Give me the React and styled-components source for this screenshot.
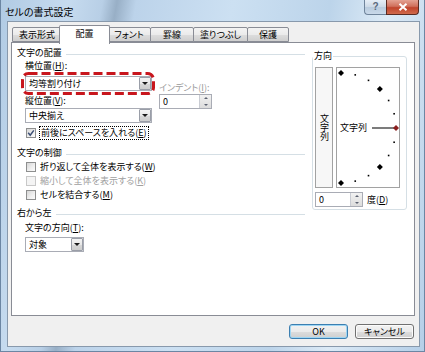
import styled, { createGlobalStyle } from "styled-components";

const GlobalStyle = createGlobalStyle`
  html, body {
    margin: 0;
    padding: 0;
    background: #ffffff;
  }
  body {
    font-family: "Noto Sans CJK JP", "Noto Sans", sans-serif;
    font-size: 9px;
    font-feature-settings: "palt";
    color: #000;
  }
`;

const tabs = [
  { label: "表示形式", width: 50 },
  { label: "配置", width: 47, active: true },
  { label: "フォント", width: 44 },
  { label: "罫線", width: 44 },
  { label: "塗りつぶし", width: 55 },
  { label: "保護", width: 42 },
];

// points of the orientation dial, every 15 degrees
const dialPoints = Array.from({ length: 13 }, (_, i) => {
  const deg = -90 + i * 15;
  const rad = (deg * Math.PI) / 180;
  return {
    x: 4 + 55 * Math.cos(rad),
    y: 60 + 55 * Math.sin(rad),
    big: deg % 45 === 0,
    red: deg === 0,
  };
});

const Arrow = ({ up }) => <ArrowShape $up={up} />;

const Combo = ({ value, width }) => (
  <ComboBox $w={width}>
    <ComboValue>{value}</ComboValue>
    <DropButton>
      <Arrow />
    </DropButton>
  </ComboBox>
);

const Spin = ({ value, width }) => (
  <SpinBox $w={width}>
    <SpinValue>{value}</SpinValue>
    <SpinButtons>
      <SpinHalf>
        <Arrow up />
      </SpinHalf>
      <SpinHalf>
        <Arrow />
      </SpinHalf>
    </SpinButtons>
  </SpinBox>
);

const CheckBox = ({ checked, disabled }) => (
  <Box $disabled={disabled}>
    {checked && (
      <svg width="8" height="8" viewBox="0 0 8 8">
        <polyline
          points="1.2,3.8 3.2,6.2 6.8,1.4"
          fill="none"
          stroke="#3b4e74"
          strokeWidth="1.5"
        />
      </svg>
    )}
  </Box>
);

const FormatCellsDialog = () => {
  return (
    <Window>
      <TitleBar>
        <TitleText>セルの書式設定</TitleText>
        <Captions>
          <HelpButton>?</HelpButton>
          <CloseButton>
            <svg width="10" height="8" viewBox="0 0 10 8">
              <path
                d="M1.5 0.8 L8.5 7.2 M8.5 0.8 L1.5 7.2"
                stroke="#fff"
                strokeWidth="2"
              />
            </svg>
          </CloseButton>
        </Captions>
      </TitleBar>

      <Body>
        <TabRow>
          {tabs.map((t) => (
            <Tab key={t.label} $w={t.width} $active={t.active}>
              {t.label}
            </Tab>
          ))}
        </TabRow>

        <Panel>
          <LeftColumn>
            <Heading>文字の配置</Heading>
            <Indent>
              <Label>
                横位置(<u>H</u>):
              </Label>
              <AlignRow>
                <AlignStack>
                  <Marked>
                    <Combo value="均等割り付け" width={127} />
                    <MarkSvg width="134" height="23" viewBox="0 0 134 23">
                      <rect
                        x="1.5"
                        y="1.5"
                        width="131"
                        height="20"
                        rx="6"
                        fill="none"
                        stroke="#c8161d"
                        strokeWidth="3"
                        strokeDasharray="9 4"
                      />
                    </MarkSvg>
                  </Marked>
                  <Label $top={4}>
                    縦位置(<u>V</u>):
                  </Label>
                  <Combo value="中央揃え" width={127} />
                </AlignStack>
                <IndentStack>
                  <Label $disabled>
                    インデント(<u>I</u>):
                  </Label>
                  <Spin value="0" width={53} />
                </IndentStack>
              </AlignRow>
              <CheckRow $top={3}>
                <CheckBox checked />
                <FocusText>
                  前後にスペースを入れる(<u>E</u>)
                </FocusText>
              </CheckRow>
            </Indent>

            <Heading $top={7}>文字の制御</Heading>
            <Indent>
              <CheckRow $top={1}>
                <CheckBox />
                <CheckText>
                  折り返して全体を表示する(<u>W</u>)
                </CheckText>
              </CheckRow>
              <CheckRow>
                <CheckBox disabled />
                <CheckText $disabled>
                  縮小して全体を表示する(<u>K</u>)
                </CheckText>
              </CheckRow>
              <CheckRow>
                <CheckBox />
                <CheckText>
                  セルを結合する(<u>M</u>)
                </CheckText>
              </CheckRow>
            </Indent>

            <Heading $top={5}>右から左</Heading>
            <Indent>
              <Label $top={3}>
                文字の方向(<u>T</u>):
              </Label>
              <ComboGap>
                <Combo value="対象" width={59} />
              </ComboGap>
            </Indent>
          </LeftColumn>

          <Group>
            <Legend>方向</Legend>
            <OrientRow>
              <VerticalText>文字列</VerticalText>
              <Dial>
                <DialDots width="62" height="119" viewBox="0 0 62 119">
                  {dialPoints.map((p, i) =>
                    p.big ? (
                      <polygon
                        key={i}
                        points={`${p.x},${p.y - 3} ${p.x + 3},${p.y} ${p.x},${p.y + 3} ${p.x - 3},${p.y}`}
                        fill={p.red ? "#8a1f1f" : "#000"}
                      />
                    ) : (
                      <rect
                        key={i}
                        x={p.x - 0.8}
                        y={p.y - 0.8}
                        width="1.6"
                        height="1.6"
                        fill="#000"
                      />
                    )
                  )}
                </DialDots>
                <DialCaption>文字列</DialCaption>
                <Needle />
              </Dial>
            </OrientRow>
            <DegreeRow>
              <Spin value="0" width={48} />
              <span>
                度(<u>D</u>)
              </span>
            </DegreeRow>
          </Group>
        </Panel>

        <ButtonRow>
          <PushButton $default>OK</PushButton>
          <PushButton>キャンセル</PushButton>
        </ButtonRow>
      </Body>
    </Window>
  );
};

const App = () => (
  <>
    <GlobalStyle />
    <FormatCellsDialog />
  </>
);

export default App;

// styled components

const Window = styled.div`
  box-sizing: border-box;
  width: 425px;
  height: 352px;
  display: flex;
  flex-direction: column;
  padding: 0 4px 4px 6px;
  border: 1px solid #6c86a3;
  border-top: none;
  background: linear-gradient(
    100deg,
    #b1cbe4 0%,
    #c6dbef 14%,
    #b8cfe6 21%,
    #98afc6 24%,
    #bcd3ea 28%,
    #cce0f2 48%,
    #bcd4ea 68%,
    #dceaf6 80%,
    #b5cfe8 100%
  );
`;

const TitleBar = styled.div`
  height: 21px;
  display: flex;
  justify-content: space-between;
  align-items: flex-start;
  flex-shrink: 0;
`;

const TitleText = styled.span`
  margin: 5px 0 0 -2px;
  font-size: 10px;
  line-height: 13px;
  color: #000;
`;

const Captions = styled.div`
  display: flex;
  margin-right: 1px;
`;

const HelpButton = styled.div`
  box-sizing: border-box;
  width: 22px;
  height: 15px;
  border: 1px solid #6f849b;
  border-top: none;
  border-right: none;
  border-radius: 0 0 0 4px;
  background: linear-gradient(#e6eef6, #cdd9e6 50%, #b9cbdd 51%, #c9d9ea);
  color: #5a6a7c;
  font-family: "Liberation Sans", Arial, sans-serif;
  font-size: 10px;
  font-weight: bold;
  line-height: 14px;
  text-align: center;
`;

const CloseButton = styled.div`
  box-sizing: border-box;
  width: 33px;
  height: 15px;
  border: 1px solid #5b2b22;
  border-top: none;
  border-radius: 0 0 4px 0;
  background: linear-gradient(#e4a293, #d0705c 45%, #c0442c 55%, #d06a4c);
  display: flex;
  align-items: center;
  justify-content: center;
`;

const Body = styled.div`
  flex: 1;
  box-sizing: border-box;
  background: #f0f0f0;
  border: 1px solid #8899ac;
  padding: 3px 4px 0 3px;
  display: flex;
  flex-direction: column;
`;

const TabRow = styled.div`
  height: 17px;
  display: flex;
  align-items: flex-end;
  padding-left: 1px;
  position: relative;
  z-index: 1;
`;

const Tab = styled.div`
  box-sizing: border-box;
  width: ${(p) => (p.$active ? p.$w + 4 : p.$w)}px;
  height: ${(p) => (p.$active ? 19 : 15)}px;
  margin: 0 ${(p) => (p.$active ? -2 : 0)}px
    ${(p) => (p.$active ? -2 : 0)}px ${(p) => (p.$active ? -3 : -1)}px;
  &:first-child {
    margin-left: 0;
  }
  border: 1px solid #898c95;
  border-bottom: ${(p) => (p.$active ? "none" : "1px solid #898c95")};
  border-radius: 2px 2px 0 0;
  background: ${(p) =>
    p.$active
      ? "#ffffff"
      : "linear-gradient(#f3f3f3, #ebebeb 50%, #dddddd 51%, #cfcfcf)"};
  position: relative;
  z-index: ${(p) => (p.$active ? 2 : 1)};
  display: flex;
  justify-content: center;
  align-items: ${(p) => (p.$active ? "flex-start" : "center")};
  padding-top: ${(p) => (p.$active ? 2 : 0)}px;
  line-height: 12px;
  font-size: 9px;
  white-space: nowrap;
`;

const Panel = styled.div`
  box-sizing: border-box;
  height: 274px;
  background: #ffffff;
  border: 1px solid #898c95;
  padding: 4px 7px 0 5px;
  display: flex;
  gap: 7px;
  align-items: flex-start;
`;

const LeftColumn = styled.div`
  width: 288px;
  display: flex;
  flex-direction: column;
`;

const Heading = styled.div`
  display: flex;
  align-items: center;
  gap: 4px;
  height: 12px;
  line-height: 12px;
  margin-top: ${(p) => p.$top || 0}px;
  white-space: nowrap;
  &::after {
    content: "";
    flex: 1;
    border-top: 1px solid #d5dfe5;
    margin-top: 3px;
  }
`;

const Indent = styled.div`
  display: flex;
  flex-direction: column;
  padding-left: 8px;
`;

const Label = styled.div`
  height: 12px;
  line-height: 12px;
  margin-top: ${(p) => p.$top ?? 1}px;
  color: ${(p) => (p.$disabled ? "#9a9a9a" : "#000")};
  white-space: nowrap;
`;

const AlignRow = styled.div`
  display: flex;
  margin-top: 4px;
`;

const AlignStack = styled.div`
  display: flex;
  flex-direction: column;
  & > div:last-child {
    margin-top: 1px;
  }
`;

const IndentStack = styled.div`
  display: flex;
  flex-direction: column;
  margin-left: 7px;
  padding-top: 6px;
  & > div:first-child {
    margin-top: 0;
  }
`;

const Marked = styled.div`
  position: relative;
`;

const MarkSvg = styled.svg`
  position: absolute;
  left: -4px;
  top: -4px;
  pointer-events: none;
`;

const ComboGap = styled.div`
  margin-top: 3px;
`;

const ComboBox = styled.div`
  box-sizing: border-box;
  width: ${(p) => p.$w}px;
  height: 15px;
  border: 1px solid #a9acb5;
  background: #ffffff;
  display: flex;
  align-items: stretch;
`;

const ComboValue = styled.span`
  flex: 1;
  padding-left: 3px;
  line-height: 13px;
  white-space: nowrap;
`;

const DropButton = styled.div`
  box-sizing: border-box;
  width: 12px;
  border: 1px solid #9a9ea8;
  border-radius: 1px;
  background: linear-gradient(#f4f4f4, #e8e8e8 50%, #d8d8d8 51%, #cdcdcd);
  display: flex;
  align-items: center;
  justify-content: center;
`;

const ArrowShape = styled.span`
  width: 0;
  height: 0;
  border-left: ${(p) => (p.$up ? 2 : 3)}px solid transparent;
  border-right: ${(p) => (p.$up ? 2 : 3)}px solid transparent;
  ${(p) =>
    p.$up
      ? "border-bottom: 2px solid #5b6170;"
      : "border-top: 3px solid #1a1a1a;"}
`;

const SpinBox = styled.div`
  box-sizing: border-box;
  width: ${(p) => p.$w}px;
  height: 15px;
  border: 1px solid #a9acb5;
  background: #ffffff;
  display: flex;
`;

const SpinValue = styled.span`
  flex: 1;
  padding-left: 3px;
  line-height: 13px;
`;

const SpinButtons = styled.div`
  width: 11px;
  display: flex;
  flex-direction: column;
  border-left: 1px solid #c9ccd3;
  background: linear-gradient(#f2f2f2, #dcdcdc);
`;

const SpinHalf = styled.div`
  flex: 1;
  display: flex;
  align-items: center;
  justify-content: center;
  & > span {
    border-top-color: #5b6170;
    border-top-width: 2px;
    border-left-width: 2px;
    border-right-width: 2px;
  }
`;

const CheckRow = styled.div`
  display: flex;
  align-items: center;
  gap: 4px;
  height: 14px;
  padding-left: 1px;
  margin-top: ${(p) => p.$top || 0}px;
`;

const Box = styled.span`
  box-sizing: border-box;
  width: 10px;
  height: 10px;
  border: 1px solid ${(p) => (p.$disabled ? "#c8c8c8" : "#8e8f8f")};
  background: ${(p) =>
    p.$disabled
      ? "#f4f4f4"
      : "linear-gradient(135deg, #d6d6d6, #f0f0f0 60%, #fbfbfb)"};
  display: flex;
  align-items: center;
  justify-content: center;
`;

const CheckText = styled.span`
  line-height: 12px;
  color: ${(p) => (p.$disabled ? "#a0a0a0" : "#000")};
  white-space: nowrap;
`;

const FocusText = styled.span`
  line-height: 12px;
  padding: 0 1px;
  outline: 1px dotted #000;
  white-space: nowrap;
`;

const Group = styled.fieldset`
  box-sizing: border-box;
  width: 95px;
  margin: 4px 0 0 0;
  padding: 6px 2px 2px 2px;
  border: 1px solid #d5dfe5;
  border-radius: 3px;
  min-width: 0;
`;

const Legend = styled.legend`
  padding: 0 1px;
  margin-left: -2px;
  line-height: 10px;
  font-size: 9px;
`;

const OrientRow = styled.div`
  display: flex;
  gap: 3px;
`;

const VerticalText = styled.div`
  box-sizing: border-box;
  width: 18px;
  height: 121px;
  border: 1px solid #a2a2a2;
  background: #f7f7f7;
  writing-mode: vertical-rl;
  text-orientation: upright;
  display: flex;
  align-items: center;
  justify-content: center;
  line-height: 10px;
`;

const Dial = styled.div`
  box-sizing: border-box;
  width: 64px;
  height: 121px;
  border: 1px solid #a2a2a2;
  background: #ffffff;
  position: relative;
  display: flex;
  align-items: center;
  padding-left: 3px;
`;

const DialDots = styled.svg`
  position: absolute;
  left: 0;
  top: 0;
`;

const DialCaption = styled.span`
  line-height: 12px;
  white-space: nowrap;
`;

const Needle = styled.span`
  width: 22px;
  height: 2px;
  margin-left: 5px;
  background: #7c7c7c;
`;

const DegreeRow = styled.div`
  display: flex;
  align-items: center;
  gap: 4px;
  margin-top: 4px;
  line-height: 12px;
`;

const ButtonRow = styled.div`
  display: flex;
  justify-content: flex-end;
  gap: 7px;
  padding: 8px 1px 0 0;
`;

const PushButton = styled.div`
  box-sizing: border-box;
  width: 59px;
  height: 15px;
  border: 1px solid ${(p) => (p.$default ? "#3c7fb1" : "#707070")};
  border-radius: 3px;
  background: linear-gradient(#f2f2f2, #ebebeb 50%, #dddddd 51%, #cfcfcf);
  box-shadow: ${(p) =>
    p.$default ? "inset 0 0 0 1px #9ed6f4" : "inset 0 0 0 1px #fbfbfb"};
  text-align: center;
  line-height: 13px;
  font-size: 9px;
`;
